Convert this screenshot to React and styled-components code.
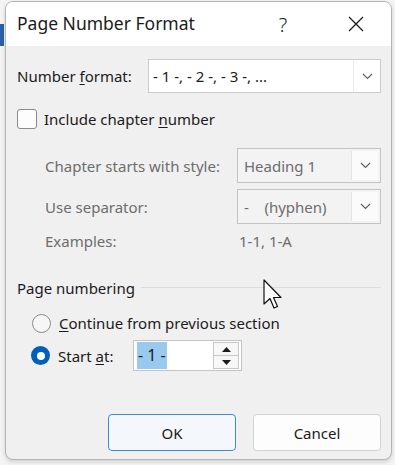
import React from 'react';
import styled, { createGlobalStyle } from 'styled-components';

const GlobalStyle = createGlobalStyle`
  html, body {
    margin: 0;
    padding: 0;
    background: #f4f4f4;
    font-family: "Noto Sans", "Liberation Sans", sans-serif;
  }
`;

const Page = styled.div`
  position: relative;
  width: 395px;
  height: 465px;
  overflow: hidden;
  background: #f4f4f4;
  display: flex;
  align-items: flex-start;
`;

const RibbonEdge = styled.div`
  width: 4px;
  height: 22px;
  margin-top: 24px;
  background: #2b5fa8;
  flex: none;
`;

const Dialog = styled.div`
  margin-top: 1px;
  margin-left: 1px;
  width: 385px;
  height: 457px;
  border: 1px solid #b4b4b4;
  border-radius: 8px;
  background: #f0f0f0;
  box-shadow: 0 2px 4px rgba(0, 0, 0, 0.15);
  overflow: hidden;
  display: flex;
  flex-direction: column;
  color: #1b1b1b;
`;

const TitleBar = styled.div`
  height: 44px;
  background: #fff;
  display: flex;
  align-items: center;
  padding-left: 11px;
  flex: none;
`;

const Title = styled.div`
  font-size: 17.5px;
  flex: 1;
  padding-bottom: 2px;
`;

const TitleButton = styled.div`
  width: ${(p) => p.w}px;
  height: 44px;
  display: flex;
  align-items: center;
  justify-content: center;
  font-size: 20px;
  font-weight: 300;
  color: #1b1b1b;
`;

const Body = styled.div`
  flex: 1;
  display: flex;
  flex-direction: column;
  padding: 13px 10px 0 11px;
  font-size: 15px;
`;

const Row = styled.div`
  display: flex;
  align-items: center;
  height: ${(p) => p.h || 34}px;
  margin-top: ${(p) => p.mt || 0}px;
  padding-left: ${(p) => p.indent || 0}px;
  color: ${(p) => (p.disabled ? '#6d6d6d' : '#1b1b1b')};
  white-space: pre;
`;

const Label = styled.div`
  width: ${(p) => p.w}px;
  flex: none;
  white-space: nowrap;
`;

const Select = styled.div`
  flex: 1;
  height: 100%;
  box-sizing: border-box;
  border: 1px solid ${(p) => (p.disabled ? '#c3c3c3' : '#cbcbcb')};
  background: ${(p) => (p.disabled ? '#f3f3f3' : '#fff')};
  display: flex;
  align-items: center;
  padding-left: ${(p) => (p.disabled ? 6 : 4)}px;
  color: ${(p) => (p.disabled ? '#6d6d6d' : '#1b1b1b')};
  white-space: pre;
`;

const SelectText = styled.div`
  flex: 1;
`;

const DropButton = styled.div`
  width: 26px;
  align-self: stretch;
  margin: ${(p) => (p.disabled ? '2px 2px 2px 0' : '0')};
  background: ${(p) => (p.disabled ? '#fbfbfb' : '#fff')};
  border-left: 1px solid ${(p) => (p.disabled ? '#e4e4e4' : '#ececec')};
  display: flex;
  align-items: center;
  justify-content: center;
`;

const Check = styled.div`
  width: 18px;
  height: 18px;
  border: 1px solid #8b8b8b;
  border-radius: 3px;
  background: #fdfdfd;
  margin-right: 7px;
  flex: none;
`;

const Radio = styled.div`
  width: ${(p) => (p.on ? 19 : 17)}px;
  height: ${(p) => (p.on ? 19 : 17)}px;
  border-radius: 50%;
  border: ${(p) => (p.on ? 'none' : '1px solid #8b8b8b')};
  background: ${(p) => (p.on ? '#005fb8' : '#f6f6f6')};
  display: flex;
  align-items: center;
  justify-content: center;
  margin-right: 8px;
  flex: none;

  &::after {
    content: '';
    display: ${(p) => (p.on ? 'block' : 'none')};
    width: 8px;
    height: 8px;
    border-radius: 50%;
    background: #fff;
  }
`;

const GroupHead = styled.div`
  display: flex;
  align-items: center;
  gap: 6px;
  margin-top: 23px;
  height: 24px;

  &::after {
    content: '';
    flex: 1;
    height: 1px;
    background: #dcdcdc;
    margin-top: -2px;
  }
`;

const Spinner = styled.div`
  width: 109px;
  height: 31px;
  box-sizing: border-box;
  border: 1px solid #c4c4c4;
  background: #fff;
  display: flex;
  align-items: center;
  padding-left: 3px;
`;

const Selected = styled.span`
  background: #99c9ef;
  color: #1b1b1b;
  font-size: 16px;
  padding: 2px 1px 3px 1px;
`;

const SpinButtons = styled.div`
  margin-left: auto;
  margin-right: 2px;
  width: 24px;
  height: 25px;
  display: flex;
  flex-direction: column;
  border: 1px solid #c8c8c8;
  background: #f7f7f7;
`;

const SpinButton = styled.div`
  flex: 1;
  display: flex;
  align-items: center;
  justify-content: center;
  border-top: ${(p) => (p.down ? '1px solid #c8c8c8' : 'none')};
`;

const Footer = styled.div`
  display: flex;
  justify-content: flex-end;
  gap: 17px;
  margin-top: auto;
  padding-bottom: 8px;
`;

const Button = styled.div`
  width: 128px;
  height: 37px;
  box-sizing: border-box;
  border-radius: 4px;
  border: ${(p) => (p.primary ? '1.5px solid #3f8ad0' : '1px solid #d2d2d2')};
  background: ${(p) => (p.primary ? '#f4f8fc' : '#fdfdfd')};
  display: flex;
  align-items: center;
  justify-content: center;
  font-size: 15px;
`;

const Cursor = styled.svg`
  position: absolute;
  left: 263px;
  top: 279px;
`;

const U = styled.u`
  text-underline-offset: 2px;
  text-decoration-thickness: 1px;
`;

const Chevron = ({ color = '#5f5f5f' }) => (
  <svg width="11" height="7" viewBox="0 0 11 7">
    <path d="M1 1 L5.5 5.5 L10 1" fill="none" stroke={color} strokeWidth="1.1" />
  </svg>
);

const Triangle = ({ down }) => (
  <svg width="9" height="5" viewBox="0 0 9 5">
    <path d={down ? 'M0 0 L9 0 L4.5 5 Z' : 'M0 5 L9 5 L4.5 0 Z'} fill="#1b1b1b" />
  </svg>
);

export default function App() {
  return (
    <Page>
      <GlobalStyle />
      <RibbonEdge />
      <Dialog>
        <TitleBar>
          <Title>Page Number Format</Title>
          <TitleButton w={76}>?</TitleButton>
          <TitleButton w={70}>
            <svg width="16" height="16" viewBox="0 0 16 16">
              <path d="M1 1 L15 15 M15 1 L1 15" stroke="#1b1b1b" strokeWidth="1.3" />
            </svg>
          </TitleButton>
        </TitleBar>
        <Body>
          <Row h={34}>
            <Label w={131}>
              Number <U>f</U>ormat:
            </Label>
            <Select>
              <SelectText>- 1 -, - 2 -, - 3 -, ...</SelectText>
              <DropButton>
                <Chevron />
              </DropButton>
            </Select>
          </Row>
          <Row h={20} mt={16}>
            <Check />
            <span>
              Include chapter <U>n</U>umber
            </span>
          </Row>
          <Row h={35} mt={19} indent={28} disabled>
            <Label w={192}>Chapter starts with style:</Label>
            <Select disabled>
              <SelectText>Heading 1</SelectText>
              <DropButton disabled>
                <Chevron />
              </DropButton>
            </Select>
          </Row>
          <Row h={35} mt={6} indent={28} disabled>
            <Label w={192}>Use separator:</Label>
            <Select disabled>
              <SelectText>{'-    (hyphen)'}</SelectText>
              <DropButton disabled>
                <Chevron />
              </DropButton>
            </Select>
          </Row>
          <Row h={24} mt={5} indent={28} disabled>
            <Label w={194}>Examples:</Label>
            <span>1-1, 1-A</span>
          </Row>
          <GroupHead>Page numbering</GroupHead>
          <Row h={24} mt={11} indent={15}>
            <Radio />
            <span>
              <U>C</U>ontinue from previous section
            </span>
          </Row>
          <Row h={31} mt={5} indent={14}>
            <Radio on />
            <Label w={75}>
              Start <U>a</U>t:
            </Label>
            <Spinner>
              <Selected>- 1 -</Selected>
              <SpinButtons>
                <SpinButton>
                  <Triangle />
                </SpinButton>
                <SpinButton down>
                  <Triangle down />
                </SpinButton>
              </SpinButtons>
            </Spinner>
          </Row>
          <Footer>
            <Button primary>OK</Button>
            <Button>Cancel</Button>
          </Footer>
        </Body>
      </Dialog>
      <Cursor width="22" height="34" viewBox="0 0 22 34">
        <path
          d="M1 1 L1 25 L7 19.5 L11 29 L14.5 27.5 L10.5 18.5 L18 18.5 Z"
          fill="#fff"
          stroke="#111"
          strokeWidth="1.2"
          strokeLinejoin="round"
        />
      </Cursor>
    </Page>
  );
}
